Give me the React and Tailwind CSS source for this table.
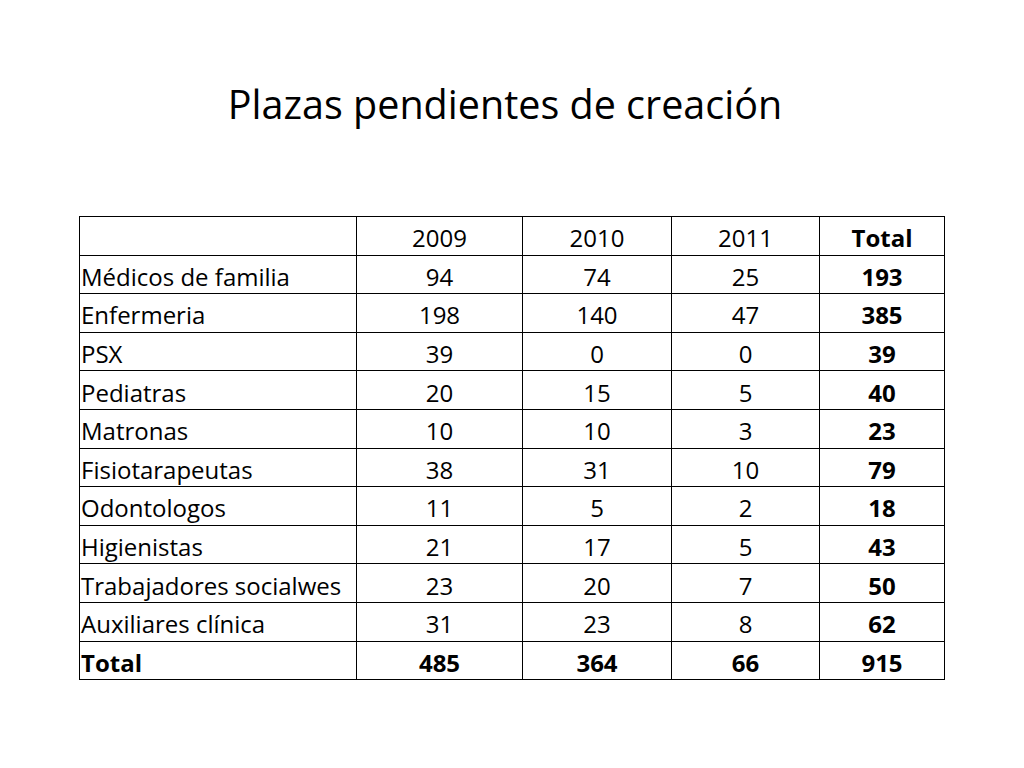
const rows = [
  ["Médicos de familia", "94", "74", "25", "193"],
  ["Enfermeria", "198", "140", "47", "385"],
  ["PSX", "39", "0", "0", "39"],
  ["Pediatras", "20", "15", "5", "40"],
  ["Matronas", "10", "10", "3", "23"],
  ["Fisiotarapeutas", "38", "31", "10", "79"],
  ["Odontologos", "11", "5", "2", "18"],
  ["Higienistas", "21", "17", "5", "43"],
  ["Trabajadores socialwes", "23", "20", "7", "50"],
  ["Auxiliares clínica", "31", "23", "8", "62"],
];

const cell = "border border-black h-[38.6px] pt-[5px] pb-0 align-middle";

export default function App() {
  return (
    <div
      className="w-[1024px] h-[768px] bg-white text-black overflow-hidden"
      style={{ fontFamily: "'Open Sans', Lato, sans-serif" }}
    >
      <h1 className="pt-[80px] text-center text-[39.5px] leading-[48px] font-normal pr-[14px]">
        Plazas pendientes de creación
      </h1>
      <table className="ml-[79px] mt-[88px] border-collapse border-[1.5px] border-black text-[24px] leading-none table-fixed w-[865px]">
        <colgroup>
          <col className="w-[277px]" />
          <col className="w-[166px]" />
          <col className="w-[149px]" />
          <col className="w-[148px]" />
          <col className="w-[125px]" />
        </colgroup>
        <tbody>
          <tr>
            <td className={cell}></td>
            <td className={cell + " text-center"}>2009</td>
            <td className={cell + " text-center"}>2010</td>
            <td className={cell + " text-center"}>2011</td>
            <td className={cell + " text-center font-bold"}>Total</td>
          </tr>
          {rows.map((r) => (
            <tr key={r[0]}>
              <td className={cell + " pl-[1px] whitespace-nowrap"}>{r[0]}</td>
              <td className={cell + " text-center"}>{r[1]}</td>
              <td className={cell + " text-center"}>{r[2]}</td>
              <td className={cell + " text-center"}>{r[3]}</td>
              <td className={cell + " text-center font-bold"}>{r[4]}</td>
            </tr>
          ))}
          <tr className="font-bold">
            <td className={cell + " pl-[1px]"}>Total</td>
            <td className={cell + " text-center"}>485</td>
            <td className={cell + " text-center"}>364</td>
            <td className={cell + " text-center"}>66</td>
            <td className={cell + " text-center"}>915</td>
          </tr>
        </tbody>
      </table>
    </div>
  );
}
